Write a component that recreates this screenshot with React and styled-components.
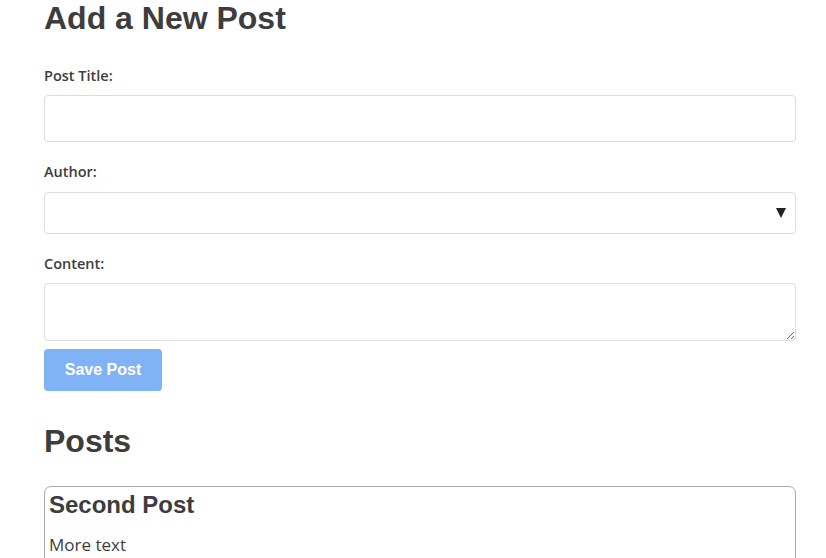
import React from "react";
import styled, { createGlobalStyle } from "styled-components";

const GlobalStyle = createGlobalStyle`
  html, body {
    margin: 0;
    padding: 0;
    background: #fff;
    overflow: hidden;
  }
  body {
    font-family: "Open Sans", "Liberation Sans", sans-serif;
    color: #3d3d3d;
  }
`;

const Page = styled.main`
  width: 752px;
  padding: 0 30px 0 44px;
`;

const Heading = styled.h2`
  font-family: "Liberation Sans", Arial, sans-serif;
  font-size: 32px;
  font-weight: 700;
  line-height: 38px;
  margin: ${(p) => p.$top || "0"} 0 0 0;
  color: #3d3d3d;
`;

const Form = styled.form`
  display: flex;
  flex-direction: column;
`;

const Label = styled.label`
  display: block;
  font-size: 14.5px;
  font-weight: 600;
  line-height: 20px;
  margin-top: ${(p) => p.$top || "20px"};
  margin-bottom: ${(p) => p.$bottom || "9px"};
  color: #3d3d3d;
`;

const fieldBase = `
  box-sizing: border-box;
  width: 100%;
  border: 1px solid #dcdcdc;
  border-radius: 4px;
  background: #fff;
  font-family: inherit;
  font-size: 16px;
  margin: 0;
  outline: none;
`;

const Input = styled.input`
  ${fieldBase}
  height: 47px;
  padding: 0 12px;
`;

const SelectWrap = styled.div`
  position: relative;
`;

const Select = styled.select`
  ${fieldBase}
  height: 42px;
  padding: 0 12px;
  appearance: none;
`;

const Caret = styled.span`
  position: absolute;
  right: 10px;
  top: 50%;
  transform: translateY(-50%);
  width: 0;
  height: 0;
  border-left: 5px solid transparent;
  border-right: 5px solid transparent;
  border-top: 10px solid #222;
  pointer-events: none;
`;

const TextArea = styled.textarea`
  ${fieldBase}
  height: 58px;
  padding: 8px 12px;
  display: block;
  resize: vertical;
`;

const Button = styled.button`
  align-self: flex-start;
  margin-top: 8px;
  width: 118px;
  height: 42px;
  border: none;
  border-radius: 4px;
  background: #80b3f6;
  color: #fff;
  font-family: "Liberation Sans", Arial, sans-serif;
  font-size: 16px;
  font-weight: 700;
  cursor: default;
`;

const PostCard = styled.article`
  margin-top: 26px;
  border: 1px solid #a9a9a9;
  border-radius: 7px;
  padding: 3px 4px 20px 4px;
`;

const PostTitle = styled.h3`
  font-family: "Liberation Sans", Arial, sans-serif;
  font-size: 24px;
  font-weight: 700;
  line-height: 28px;
  margin: 1px 0 0 0;
  color: #3d3d3d;
`;

const PostBody = styled.p`
  font-size: 17px;
  font-weight: 400;
  line-height: 24px;
  margin: 14px 0 0 0;
  color: #3d3d3d;
`;

export default function App() {
  return (
    <>
      <GlobalStyle />
      <Page>
        <section>
          <Heading $top="-1px">Add a New Post</Heading>
          <Form onSubmit={(e) => e.preventDefault()}>
            <Label htmlFor="postTitle" $top="29px">Post Title:</Label>
            <Input id="postTitle" type="text" />
            <Label htmlFor="postAuthor" $top="20px" $bottom="10px">Author:</Label>
            <SelectWrap>
              <Select id="postAuthor" defaultValue="">
                <option value=""></option>
              </Select>
              <Caret />
            </SelectWrap>
            <Label htmlFor="postContent">Content:</Label>
            <TextArea id="postContent" />
            <Button type="button" disabled>Save Post</Button>
          </Form>
        </section>
        <section>
          <Heading $top="31px">Posts</Heading>
          <PostCard>
            <PostTitle>Second Post</PostTitle>
            <PostBody>More text</PostBody>
          </PostCard>
        </section>
      </Page>
    </>
  );
}
